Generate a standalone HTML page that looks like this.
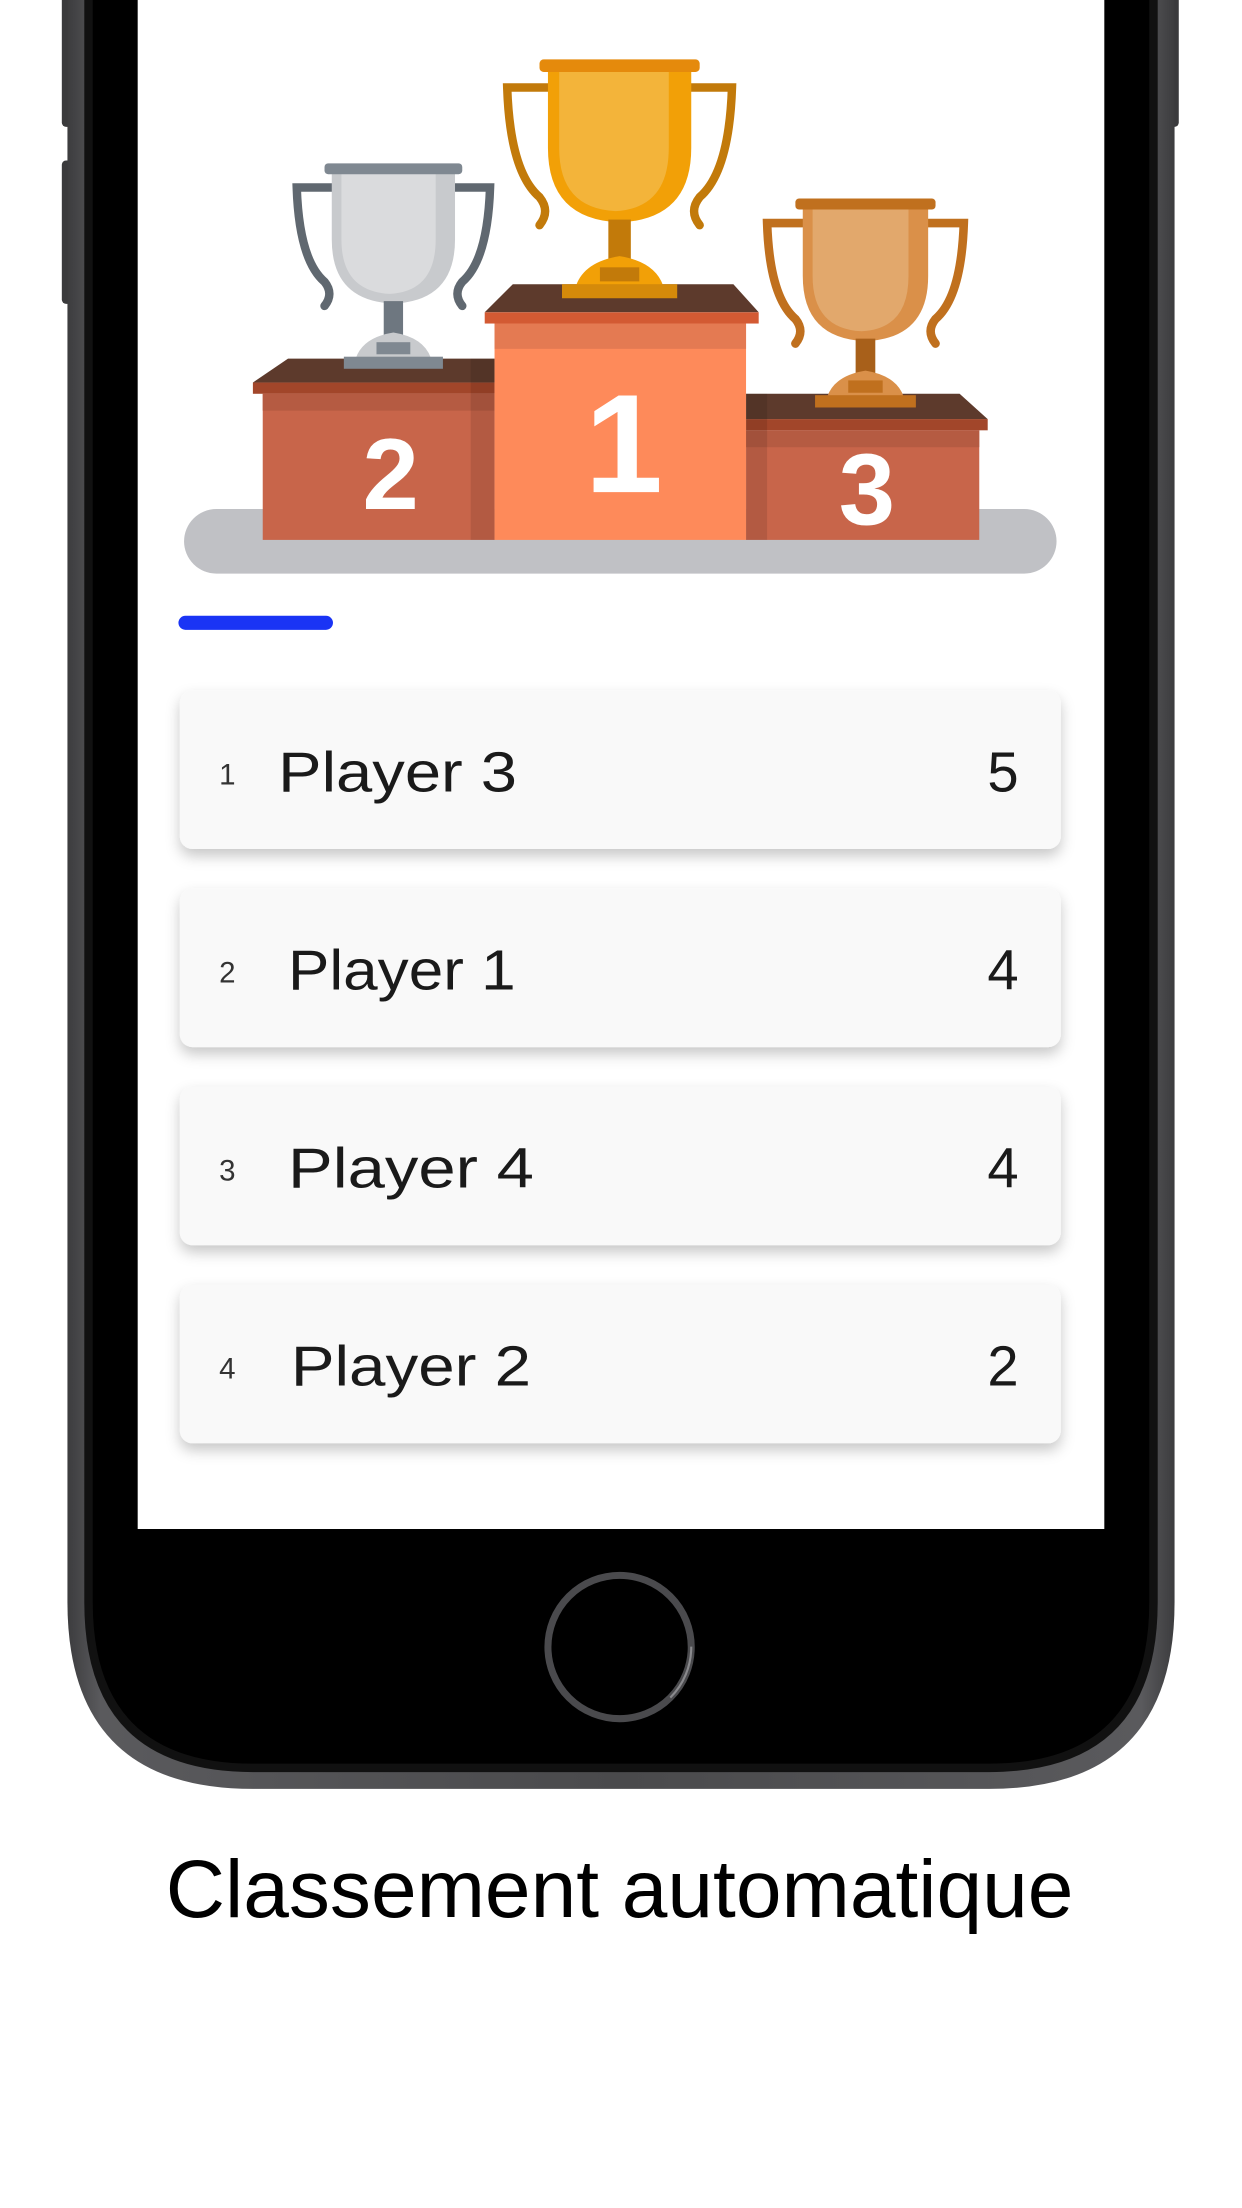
<!DOCTYPE html>
<html><head><meta charset="utf-8"><style>
html,body{margin:0;padding:0;background:#fff;}
svg{display:block}
</style></head><body>
<svg width="1242" height="2208" viewBox="0 0 884 1571" xmlns="http://www.w3.org/2000/svg">
<defs>
<filter id="sh" x="-10%" y="-20%" width="120%" height="160%">
<feDropShadow dx="0" dy="5" stdDeviation="5" flood-color="#000" flood-opacity="0.22"/>
</filter>
<linearGradient id="body" x1="0" x2="1" y1="0" y2="0">
<stop offset="0" stop-color="#3c3c3e"/><stop offset="0.03" stop-color="#5a5a5d"/><stop offset="0.5" stop-color="#4a4a4c"/><stop offset="0.97" stop-color="#5a5a5d"/><stop offset="1" stop-color="#3c3c3e"/>
</linearGradient>
</defs>
<rect x="44" y="-10" width="8" height="100" rx="3" fill="#3a3a3c"/>
<rect x="44" y="114" width="8" height="102" rx="3" fill="#3a3a3c"/>
<rect x="832" y="-10" width="7" height="100" rx="3" fill="#3a3a3c"/>
<path d="M48 -20 V1140 Q48 1273 180 1273 H704 Q836 1273 836 1140 V-20 Z" fill="url(#body)"/>
<path d="M60 -20 V1140 Q60 1261 180 1261 H704 Q824 1261 824 1140 V-20 Z" fill="#111"/>
<path d="M66 -20 V1140 Q66 1255 180 1255 H704 Q818 1255 818 1140 V-20 Z" fill="#000"/>
<rect x="98" y="-10" width="688" height="1098" fill="#fff"/>
<circle cx="441" cy="1172" r="51" fill="none" stroke="#4a4a4d" stroke-width="5"/>
<circle cx="441" cy="1172" r="51" fill="none" stroke="#8a8a8d" stroke-width="1.5" stroke-dasharray="40 280"/>

<rect x="131" y="362" width="621" height="46" rx="23" fill="#c0c1c5"/>
<polygon points="205,255 352,255 352,272 180,272" fill="#5d3a2c"/>
<rect x="180" y="272" width="172" height="8" fill="#a2462a"/>
<rect x="187" y="280" width="165" height="104" fill="#c8654a"/>
<rect x="187" y="280" width="165" height="12" fill="#b55b42"/>
<rect x="335" y="255" width="17" height="129" fill="#000" opacity="0.1"/>
<polygon points="531,280 683,280 703,298 531,298" fill="#5d3a2c"/>
<rect x="531" y="298" width="172" height="8" fill="#a2462a"/>
<rect x="531" y="306" width="166" height="78" fill="#c8654a"/>
<rect x="531" y="306" width="166" height="12" fill="#b55b42"/>
<rect x="531" y="280" width="15" height="104" fill="#000" opacity="0.1"/>
<polygon points="365,202 522,202 540,222 345,222" fill="#5d3a2c"/>
<rect x="345" y="222" width="195" height="8" fill="#d35a33"/>
<rect x="352" y="230" width="179" height="154" fill="#fe8a5a"/>
<rect x="352" y="230" width="179" height="18" fill="#e47a52"/>
<text x="444" y="350" font-family="Liberation Sans, sans-serif" font-weight="bold" font-size="100" fill="#fff" text-anchor="middle">1</text>
<text x="278" y="362" font-family="Liberation Sans, sans-serif" font-weight="bold" font-size="72" fill="#fff" text-anchor="middle">2</text>
<text x="617" y="373" font-family="Liberation Sans, sans-serif" font-weight="bold" font-size="72" fill="#fff" text-anchor="middle">3</text>

<g>
<path d="M392 62 H361 Q363 122 384 140 Q392 150 384 160" fill="none" stroke="#c27a0a" stroke-width="6" stroke-linecap="round"/>
<path d="M490 62 H521 Q519 122 498 140 Q490 150 498 160" fill="none" stroke="#c27a0a" stroke-width="6" stroke-linecap="round"/>
<path d="M390 50 H492 V105 Q492 156 441 158 Q390 156 390 105 Z" fill="#f2a007"/>
<path d="M398 50 H476 V105 Q476 148 438 150 Q398 148 398 105 Z" fill="#f3b43a"/>
<rect x="384" y="42" width="114" height="9" rx="3" fill="#e58a0c"/>
<rect x="433" y="156" width="16" height="30" fill="#c27a0a"/>
<path d="M410 203 Q416 186 441 182 Q466 186 472 203 Z" fill="#f2a007"/>
<rect x="427" y="190" width="28" height="10" fill="#c27a0a"/>
<rect x="400" y="202" width="82" height="10" fill="#d58a0a"/>
</g>
<g transform="translate(280,116) scale(0.86) translate(-441,-42)">
<path d="M392 62 H361 Q363 122 384 140 Q392 150 384 160" fill="none" stroke="#606870" stroke-width="7" stroke-linecap="round"/>
<path d="M490 62 H521 Q519 122 498 140 Q490 150 498 160" fill="none" stroke="#606870" stroke-width="7" stroke-linecap="round"/>
<path d="M390 50 H492 V105 Q492 156 441 158 Q390 156 390 105 Z" fill="#c8cacd"/>
<path d="M398 50 H476 V105 Q476 148 438 150 Q398 148 398 105 Z" fill="#dadbdd"/>
<rect x="384" y="42" width="114" height="9" rx="3" fill="#7f8891"/>
<rect x="433" y="156" width="16" height="30" fill="#6e7780"/>
<path d="M410 203 Q416 186 441 182 Q466 186 472 203 Z" fill="#c8cacd"/>
<rect x="427" y="190" width="28" height="10" fill="#7f8891"/>
<rect x="400" y="202" width="82" height="10" fill="#7f8891"/>
</g>
<g transform="translate(616,141) scale(0.875) translate(-441,-42)">
<path d="M392 62 H361 Q363 122 384 140 Q392 150 384 160" fill="none" stroke="#c0701e" stroke-width="7" stroke-linecap="round"/>
<path d="M490 62 H521 Q519 122 498 140 Q490 150 498 160" fill="none" stroke="#c0701e" stroke-width="7" stroke-linecap="round"/>
<path d="M390 50 H492 V105 Q492 156 441 158 Q390 156 390 105 Z" fill="#da9049"/>
<path d="M398 50 H476 V105 Q476 148 438 150 Q398 148 398 105 Z" fill="#e2a86c"/>
<rect x="384" y="42" width="114" height="9" rx="3" fill="#c0701e"/>
<rect x="433" y="156" width="16" height="30" fill="#a8601a"/>
<path d="M410 203 Q416 186 441 182 Q466 186 472 203 Z" fill="#da9049"/>
<rect x="427" y="190" width="28" height="10" fill="#c0701e"/>
<rect x="400" y="202" width="82" height="10" fill="#c0701e"/>
</g>

<rect x="127" y="438" width="110" height="10" rx="5" fill="#1a34f5"/>

<g font-family="Liberation Sans, sans-serif" fill="#1a1a1a">
<rect x="128" y="491" width="627" height="113" rx="9" fill="#f9f9f9" filter="url(#sh)"/>
<text x="156" y="558" font-size="21" fill="#333">1</text>
<text x="198" y="563" font-size="40" textLength="170" lengthAdjust="spacingAndGlyphs">Player 3</text>
<text x="725" y="563" font-size="40" text-anchor="end">5</text>

<rect x="128" y="632" width="627" height="113" rx="9" fill="#f9f9f9" filter="url(#sh)"/>
<text x="156" y="699" font-size="21" fill="#333">2</text>
<text x="205" y="704" font-size="40" textLength="162" lengthAdjust="spacingAndGlyphs">Player 1</text>
<text x="725" y="704" font-size="40" text-anchor="end">4</text>

<rect x="128" y="773" width="627" height="113" rx="9" fill="#f9f9f9" filter="url(#sh)"/>
<text x="156" y="840" font-size="21" fill="#333">3</text>
<text x="205" y="845" font-size="40" textLength="175" lengthAdjust="spacingAndGlyphs">Player 4</text>
<text x="725" y="845" font-size="40" text-anchor="end">4</text>

<rect x="128" y="914" width="627" height="113" rx="9" fill="#f9f9f9" filter="url(#sh)"/>
<text x="156" y="981" font-size="21" fill="#333">4</text>
<text x="207" y="986" font-size="40" textLength="171" lengthAdjust="spacingAndGlyphs">Player 2</text>
<text x="725" y="986" font-size="40" text-anchor="end">2</text>
</g>

<text x="441" y="1364" font-family="Liberation Sans, sans-serif" font-size="58" fill="#000" text-anchor="middle" textLength="646" lengthAdjust="spacingAndGlyphs">Classement automatique</text>
</svg>
</body></html>
